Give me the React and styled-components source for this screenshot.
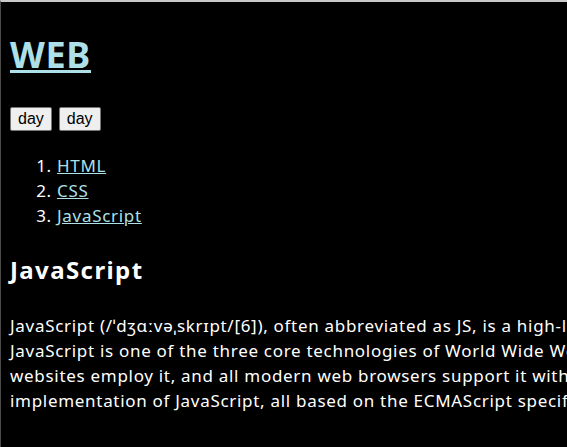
import React from 'react';
import styled, { createGlobalStyle } from 'styled-components';

const GlobalStyle = createGlobalStyle`
  html, body {
    margin: 0;
    background: #000;
  }

  body {
    border-top: 2px solid #c9c9c9;
    border-left: 1px solid #4a4a4a;
    height: 445px;
    overflow: hidden;
    color: #fff;
    font-family: "Noto Sans", "Open Sans", sans-serif;
    font-size: 17px;
    letter-spacing: 0.7px;
    line-height: 25px;
  }
`;

const Page = styled.div`
  padding: 0 9px;
`;

const Title = styled.h1`
  font-size: 36px;
  line-height: 44px;
  font-weight: 700;
  letter-spacing: 0.7px;
  margin: 31px 0 30px;

  a {
    color: #ade0e8;
  }
`;

const Toolbar = styled.div`
  display: flex;
  gap: 7px;
`;

const Button = styled.button`
  font-family: Arial, "Liberation Sans", sans-serif;
  font-size: 16px;
  letter-spacing: 0;
  line-height: 18px;
  height: 24px;
  padding: 1px 7px;
  color: #000;
  background: #efefef;
  border: 1px solid #767676;
  border-radius: 2px;
`;

const Nav = styled.ol`
  margin: 22px 0 0;
  padding-left: 47px;

  a {
    color: #ade0e8;
  }
`;

const Heading = styled.h2`
  font-size: 24px;
  line-height: 30px;
  font-weight: 700;
  letter-spacing: 1.4px;
  margin: 27px 0 28px;
`;

const Body = styled.p`
  margin: 0;
  white-space: nowrap;
`;

function App() {
  return (
    <Page>
      <GlobalStyle />
      <Title><a href="#">WEB</a></Title>
      <Toolbar>
        <Button type="button">day</Button>
        <Button type="button">day</Button>
      </Toolbar>
      <Nav>
        <li><a href="#">HTML</a></li>
        <li><a href="#">CSS</a></li>
        <li><a href="#">JavaScript</a></li>
      </Nav>
      <Heading>JavaScript</Heading>
      <Body>
        JavaScript (/ˈdʒɑːvəˌskrɪpt/[6]), often abbreviated as JS, is a high-level, interpreted programming language. It is a language which is also characterized as dynamic, weakly typed, prototype-based and multi-paradigm. Alongside HTML and CSS,
        <br />
        JavaScript is one of the three core technologies of World Wide Web content production; the majority of
        <br />
        websites employ it, and all modern web browsers support it without the need for plug-ins. Each of the many JavaScript engines represent a different
        <br />
        implementation of JavaScript, all based on the ECMAScript specification, with some engines not supporting the spec fully.
      </Body>
    </Page>
  );
}

export default App;
